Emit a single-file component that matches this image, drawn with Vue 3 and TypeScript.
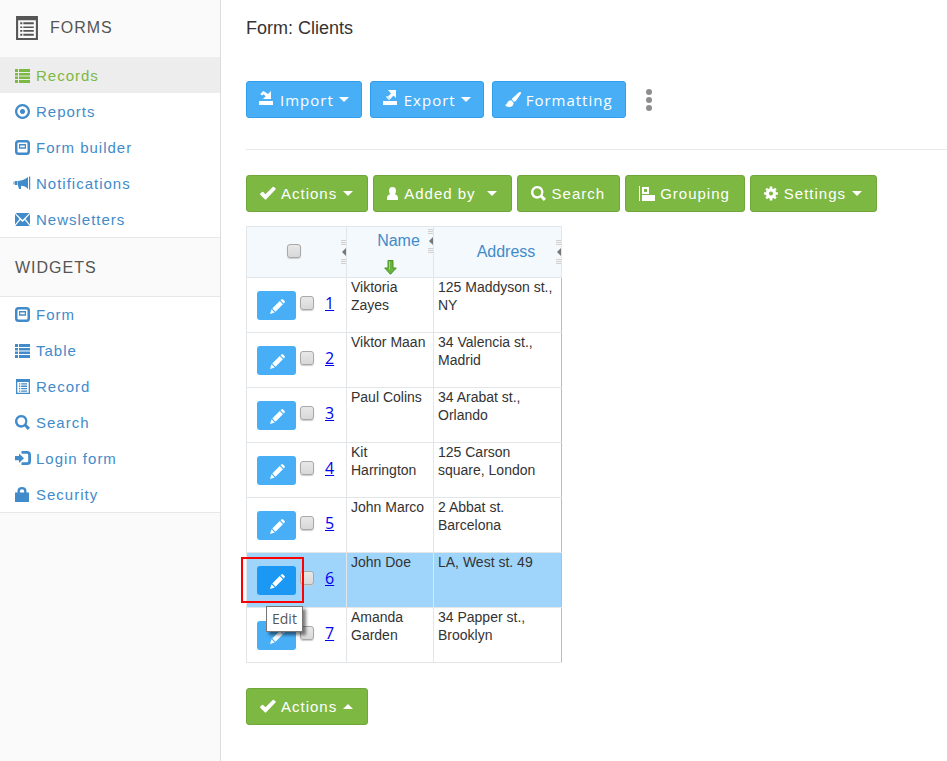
<script setup lang="ts">
import { ref } from 'vue'

interface NavItem { label: string; icon: string; active?: boolean }
interface Action { label: string; icon: string; caret?: boolean; wide?: boolean }
interface Client { id: number; name: string; address: string }

function gear(cx: number, cy: number, outer: number, inner: number): string {
  const points: string[] = []
  for (let tooth = 0; tooth < 8; tooth++) {
    const base = (tooth * Math.PI) / 4
    const corners: [number, number][] = [[-0.25, inner], [-0.18, outer], [0.18, outer], [0.25, inner]]
    for (const [offset, radius] of corners) {
      points.push(`${(cx + radius * Math.cos(base + offset)).toFixed(2)} ${(cy + radius * Math.sin(base + offset)).toFixed(2)}`)
    }
  }
  return `M${points.join('L')}z`
}

const icons: Record<string, string> = {
  list: 'M0 1h3v3H0zM4 1h11v3H4zM0 5h3v2.500H0zM4 5h11v2.500H4zM0 8.500h3V11H0zM4 8.500h11V11H4zM0 12h3v3H0zM4 12h11v3H4z',
  target: 'M7.500 0a7.500 7.500 0 1 0 .01 0zM7.500 2.300a5.200 5.200 0 1 1-.01 0zM7.500 4.900a2.600 2.600 0 1 0 .01 0z',
  form: 'M3.500 0h8q3.500 0 3.500 3.500v8q0 3.500-3.500 3.500h-8Q0 15 0 11.500v-8Q0 0 3.500 0zM3.600 2.500q-1.100 0-1.100 1.100v7.800q0 1.100 1.100 1.100h7.800q1.100 0 1.100-1.100V3.600q0-1.100-1.100-1.100zM4 4h7v4.700H4zM5.200 5.500v1.800h4.600V5.500z',
  bullhorn: 'M-1.500 5.500h1v3h-1zM0 5h2.500v4H0zM3 5q6-.5 10-4v12Q10 9.700 6 9.700V13H4L3 9.500zM14 .500h1.200v13H14z',
  envelope: 'M.500 1h14L7.500 8zM0 2l4.500 5L0 12.500zM15 2v10.500L10.500 7zM.300 14l5-6 2.200 2 2.200-2 5 6z',
  record: 'M1 0h14v15H1zM2.300 3v10.700h11.400V3zM4 4.200h1.300v1.300H4zM6.200 4.200H12v1.300H6.200zM4 6.600h1.300v1.300H4zM6.200 6.600H12v1.300H6.200zM4 9h1.300v1.300H4zM6.200 9H12v1.300H6.200zM4 11.400h1.300v1.300H4zM6.200 11.400H12v1.300H6.200z',
  search: 'M6.300 0a6.300 6.300 0 1 0 3.300 11.600L12.800 15l2.200-2.200-3.400-3.200A6.300 6.300 0 0 0 6.300 0zM6.300 2.300a4 4 0 1 1-.01 0z',
  login: 'M0 5h4V2.500L9 7.200 4 12V9.200H0zM6.500 0H12q4 0 4 4v6.500q0 3.500-4 3.500H6.500v-2.700H12q1.200 0 1.200-1.200V4q0-1.300-1.200-1.300H6.500z',
  lock: 'M0 5.500h2.500V4q0-4 4.500-4t4.500 4v1.500H14V15H0zM4.900 5.500h4.200V4q0-1.700-2.100-1.700T4.900 4z',
  import: 'M0 11h14v4H0zM12 1v8H4l2.700-2.700L4.500 4.200 3 5.600 1.300 4l3-3 4.800 3z',
  export: 'M0 11h14v4H0zM5 0h8v8l-2.500-2.500L7 9.400 4.500 7 8 3.500zM3 7l1-1 3 3-1 1z',
  brush: 'M15.500 0q.8.500.2 2L11 8.700q-1 1-2 1L7 7.700q-.2-1 1-2L14 .300q.9-.6 1.500-.3zM6.200 8.300l2.400 2.500Q8.500 15 4 15q-3 0-4-2.200 1.500.1 2-1.500.7-3 4.200-3z',
  ok: 'M15.700 3.300 6.200 13.300q-.7.700-1.400 0L.300 8.800q-.5-.6 0-1.200L2 6q.6-.5 1.200 0l2.300 2.200L12.700 1q.6-.6 1.200 0l1.800 1.500q.4.400 0 .8z',
  user: 'M5.500 1Q9 1 9 5q0 1.500-1 3.200 3 1 3 3.300V14H0v-2.500q0-2.300 3-3.300Q2 6.500 2 5q0-4 3.500-4z',
  group: 'M0 0h1v15H0zM3 1h7v7H3zM5 3v3h3V3zM3 9h13v6H3z',
  cog: `${gear(7, 7.5, 7, 5.2)}M7 5.400a2.100 2.100 0 1 0 .01 0z`,
  pencil: 'M0 15l1.500-4.700 3.200 3.200zM2.300 9.500 9.700 2.100l3.200 3.200-7.400 7.400zM10.500 1.300l.9-.9q.8-.7 1.600 0L14.600 2q.7.800 0 1.600l-.9.900z',
}

const formNav: NavItem[] = [
  { label: 'Records', icon: 'list', active: true },
  { label: 'Reports', icon: 'target' },
  { label: 'Form builder', icon: 'form' },
  { label: 'Notifications', icon: 'bullhorn' },
  { label: 'Newsletters', icon: 'envelope' },
]
const widgetNav: NavItem[] = [
  { label: 'Form', icon: 'form' },
  { label: 'Table', icon: 'list' },
  { label: 'Record', icon: 'record' },
  { label: 'Search', icon: 'search' },
  { label: 'Login form', icon: 'login' },
  { label: 'Security', icon: 'lock' },
]
const fileActions: Action[] = [
  { label: 'Import', icon: 'import', caret: true },
  { label: 'Export', icon: 'export', caret: true },
  { label: 'Formatting', icon: 'brush' },
]
const tableActions: Action[] = [
  { label: 'Actions', icon: 'ok', caret: true },
  { label: 'Added by', icon: 'user', caret: true, wide: true },
  { label: 'Search', icon: 'search' },
  { label: 'Grouping', icon: 'group' },
  { label: 'Settings', icon: 'cog', caret: true },
]
const clients: Client[] = [
  { id: 1, name: 'Viktoria Zayes', address: '125 Maddyson st., NY' },
  { id: 2, name: 'Viktor Maan', address: '34 Valencia st., Madrid' },
  { id: 3, name: 'Paul Colins', address: '34 Arabat st., Orlando' },
  { id: 4, name: 'Kit Harrington', address: '125 Carson square, London' },
  { id: 5, name: 'John Marco', address: '2 Abbat st. Barcelona' },
  { id: 6, name: 'John Doe', address: 'LA, West st. 49' },
  { id: 7, name: 'Amanda Garden', address: '34 Papper st., Brooklyn' },
]
const hovered = ref(6)
const selected = ref<number[]>([])
</script>

<template>
  <div class="layout">
    <aside class="sidebar">
      <h2 class="side-title">
        <svg class="forms-icon" viewBox="0 0 21 23" aria-hidden="true">
          <path fill-rule="evenodd" d="M0 0h21v23H0zM2 4v17h17V4zM4 6h2v2H4zM7 6h10v2H7zM4 10h2v1.500H4zM7 10h10v1.500H7zM4 13.500h2V15H4zM7 13.500h10V15H7zM4 17h2v2H4zM7 17h10v2H7z" />
        </svg>
        FORMS
      </h2>
      <nav class="side-nav">
        <a v-for="item in formNav" :key="item.label" href="#" class="side-link" :class="{ active: item.active }">
          <svg class="icon" viewBox="0 0 15 15" aria-hidden="true"><path fill-rule="evenodd" :d="icons[item.icon]" /></svg>
          {{ item.label }}
        </a>
      </nav>
      <h2 class="side-title widgets">WIDGETS</h2>
      <nav class="side-nav">
        <a v-for="item in widgetNav" :key="item.label" href="#" class="side-link">
          <svg class="icon" viewBox="0 0 15 15" aria-hidden="true"><path fill-rule="evenodd" :d="icons[item.icon]" /></svg>
          {{ item.label }}
        </a>
      </nav>
    </aside>

    <main class="content">
      <h1>Form: Clients</h1>
      <div class="toolbar files">
        <button v-for="a in fileActions" :key="a.label" type="button" class="btn blue" :class="a.icon">
          <svg class="icon" viewBox="0 0 15 15" aria-hidden="true"><path fill-rule="evenodd" :d="icons[a.icon]" /></svg>
          <span>{{ a.label }}</span>
          <i v-if="a.caret" class="caret"></i>
        </button>
        <button type="button" class="more" aria-label="More"><i></i><i></i><i></i></button>
      </div>
      <hr />
      <div class="toolbar">
        <button v-for="a in tableActions" :key="a.label" type="button" class="btn green" :class="[a.icon, { wide: a.wide }]">
          <svg class="icon" viewBox="0 0 15 15" preserveAspectRatio="xMinYMin slice" aria-hidden="true"><path fill-rule="evenodd" :d="icons[a.icon]" /></svg>
          <span>{{ a.label }}</span>
          <i v-if="a.caret" class="caret"></i>
        </button>
      </div>

      <table>
        <colgroup><col class="c-tools" /><col class="c-name" /><col class="c-address" /></colgroup>
        <thead>
          <tr>
            <th>
              <div class="head-row">
                <span class="head-main"><input type="checkbox" aria-label="Select all" /></span>
                <span class="grip"><i></i><b></b><i></i></span>
              </div>
            </th>
            <th>
              <div class="head-row">
                <a href="#" class="head-main sortable">Name</a>
                <span class="grip"><i></i><b></b><i></i></span>
              </div>
              <svg class="sort" viewBox="0 0 13 15" aria-hidden="true">
                <path d="M4 .500h5V8h3.300L6.500 14.300.700 8H4z" fill="#68b33c" stroke="#4b9228" />
                <path d="M5.500 1.500v8" stroke="#a4d883" />
              </svg>
            </th>
            <th>
              <div class="head-row">
                <a href="#" class="head-main sortable">Address</a>
                <span class="grip"><i></i><b></b><i></i></span>
              </div>
            </th>
          </tr>
        </thead>
        <tbody>
          <tr v-for="c in clients" :key="c.id" :class="{ hovered: hovered === c.id }">
            <td class="tools">
              <div class="tool-row">
                <button type="button" class="edit" aria-label="Edit">
                  <svg class="icon" viewBox="0 0 15 15" aria-hidden="true"><path :d="icons.pencil" /></svg>
                </button>
                <input v-model="selected" type="checkbox" :value="c.id" :aria-label="'Select ' + c.name" />
                <a href="#" class="number">{{ c.id }}</a>
              </div>
              <template v-if="hovered === c.id">
                <span class="marker"></span>
                <span class="tooltip" role="tooltip">Edit</span>
              </template>
            </td>
            <td>{{ c.name }}</td>
            <td>{{ c.address }}</td>
          </tr>
        </tbody>
      </table>

      <div class="toolbar">
        <button type="button" class="btn green ok">
          <svg class="icon" viewBox="0 0 15 15" aria-hidden="true"><path :d="icons.ok" /></svg>
          <span>Actions</span>
          <i class="caret up"></i>
        </button>
      </div>
    </main>
  </div>
</template>

<style>
body {
  margin: 0;
  background: #fff;
}
</style>

<style scoped>
* {
  box-sizing: border-box;
}
.layout {
  display: flex;
  min-height: 100vh;
  font-family: "Liberation Sans", Arial, sans-serif;
  font-size: 14px;
  color: #333;
}
.icon {
  width: 15px;
  height: 15px;
  flex: none;
  fill: currentColor;
  overflow: visible;
}
.sidebar {
  flex: 0 0 221px;
  background: #fafafa;
  border-right: 1px solid #ddd;
}
.side-title {
  display: flex;
  align-items: center;
  gap: 12px;
  height: 57px;
  margin: 0;
  padding: 0 16px 2px;
  font-size: 16px;
  font-weight: 400;
  letter-spacing: 1px;
  color: #555;
}
.side-title.widgets {
  height: 58px;
  padding: 2px 15px 0;
}
.forms-icon {
  width: 22px;
  height: 24px;
  fill: #555;
}
.side-nav {
  background: #fff;
  border-bottom: 1px solid #e7e7e7;
}
.widgets + .side-nav {
  border-top: 1px solid #e7e7e7;
}
.widgets + .side-nav .side-link:first-child {
  height: 35px;
}
.side-link {
  display: flex;
  align-items: center;
  gap: 6px;
  height: 36px;
  padding: 0 15px;
  font-size: 15px;
  letter-spacing: 1px;
  color: #428bca;
  text-decoration: none;
}
.side-link.active {
  background: #ededed;
  color: #7db843;
}
.content {
  flex: 1;
  min-width: 0;
  padding: 18px 0 36px 25px;
}
h1 {
  margin: 0 0 43px;
  font-size: 18px;
  line-height: 20px;
  font-weight: 400;
}
.toolbar {
  display: flex;
  gap: 5px;
}
.files {
  gap: 8px;
}
.btn {
  display: flex;
  align-items: center;
  gap: 6px;
  height: 37px;
  padding: 0 14px 0 13px;
  border: 1px solid;
  border-radius: 3px;
  color: #fff;
  font: 15px "Liberation Sans", Arial, sans-serif;
  letter-spacing: 1px;
  white-space: nowrap;
}
.btn.blue {
  padding: 0 12px;
  background: #48aff7;
  border-color: #309feb;
  font-family: "Open Sans", sans-serif;
}
.btn.green {
  background: #7db843;
  border-color: #70a73b;
}
.btn.blue .icon {
  margin-bottom: 4px;
}
.btn.brush .icon {
  margin: 0;
}
.btn.blue .caret {
  margin-left: -1px;
}
.btn.user .icon {
  width: 11px;
}
.btn.cog .icon {
  width: 14px;
}
.btn.wide .caret {
  margin-left: 5px;
}
.caret {
  border: 5px solid transparent;
  border-top-color: #fff;
  border-bottom: 0;
}
.caret.up {
  border-top: 0;
  border-bottom: 5px solid #fff;
}
.more {
  display: flex;
  flex-direction: column;
  align-items: center;
  justify-content: center;
  gap: 2px;
  width: 30px;
  padding: 0;
  border: 0;
  background: none;
}
.more i {
  width: 6px;
  height: 6px;
  border-radius: 50%;
  background: #8d8d8d;
}
hr {
  height: 1px;
  margin: 31px 0 25px;
  border: 0;
  background: #e9e9e9;
}
table {
  width: 316px;
  margin: 14px 0 25px;
  table-layout: fixed;
  border-collapse: collapse;
  line-height: 18px;
}
.c-tools {
  width: 100px;
}
.c-name {
  width: 87px;
}
th,
td {
  border: 1px solid #e3e6e8;
}
th {
  height: 51px;
  padding: 0;
  background: #f4f9fd;
  font-size: 16px;
  font-weight: 400;
  text-align: center;
}
.head-row {
  display: flex;
  align-items: center;
  height: 22px;
}
.head-main {
  display: flex;
  flex: 1;
  justify-content: center;
}
.head-main input {
  margin-bottom: 3px;
}
.sortable {
  padding-left: 22px;
  color: #428bca;
  text-decoration: none;
}
.grip {
  display: flex;
  flex-direction: column;
  align-items: flex-end;
  gap: 3px;
  width: 5px;
}
.grip i {
  width: 5px;
  height: 5px;
  background: repeating-linear-gradient(#d0d0d0 0 1px, #f5f5f5 1px 2px);
}
.grip b {
  border: 4px solid transparent;
  border-right: 4px solid #777;
  border-left: 0;
}
.sort {
  display: block;
  width: 13px;
  height: 15px;
  margin: 8px auto 0;
}
td {
  height: 55px;
  padding: 0 4px;
  vertical-align: top;
}
td:last-child {
  border-right-color: #bbb;
}
.tools {
  position: relative;
  padding: 13px 10px 0;
}
.tool-row {
  display: flex;
  align-items: flex-start;
  gap: 4px;
}
input {
  appearance: none;
  width: 14px;
  height: 14px;
  margin: 0;
  border: 1px solid #a8a8a8;
  border-radius: 3px;
  background: linear-gradient(#e8e8e8, #d8d8d8);
  box-shadow: 0 1px 1px #ccc;
}
.tool-row input {
  margin-top: 5px;
}
input:checked {
  background: #428bca;
}
.edit {
  display: flex;
  align-items: center;
  justify-content: center;
  width: 39px;
  height: 29px;
  padding: 2px 0 0 2px;
  border: 0;
  border-radius: 3px;
  background: #48aff7;
  color: #fff;
}
.number {
  margin: 2px 0 0 7px;
  font: 16px/20px "Open Sans", sans-serif;
  color: #00e;
}
.hovered {
  background: #9fd5fb;
}
.hovered .edit {
  background: #1b98f3;
}
.marker {
  position: absolute;
  z-index: 1;
  top: 4px;
  left: -6px;
  width: 63px;
  height: 46px;
  border: 2px solid #f00;
}
.tooltip {
  position: absolute;
  z-index: 2;
  top: 53px;
  left: 19px;
  padding: 0 5px;
  border: 1px solid #767676;
  background: #fff;
  box-shadow: 3px 3px 3px rgba(0, 0, 0, 0.5);
  font: 14px/24px "Open Sans", sans-serif;
  color: #575757;
}
</style>
